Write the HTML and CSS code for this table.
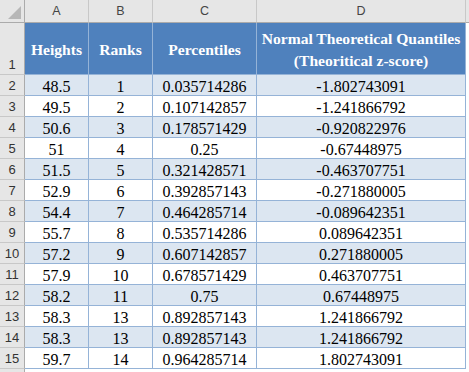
FILE: index.html
```html
<!DOCTYPE html>
<html lang="en">
<head>
  <meta charset="UTF-8" />
  <title>Normal Quantiles</title>
  <link rel="stylesheet" href="styles.css">
</head>
<body>
  <div class="sheet">
    <!-- column letters -->
    <div class="corner"><span class="corner-tri"></span></div>
    <div class="col-head">A</div>
    <div class="col-head">B</div>
    <div class="col-head">C</div>
    <div class="col-head">D</div>
    <div class="col-head edge"></div>

    <!-- title row -->
    <div class="row-head tall">1</div>
    <div class="cell title">Heights</div>
    <div class="cell title">Ranks</div>
    <div class="cell title">Percentiles</div>
    <div class="cell title">Normal Theoretical Quantiles<br>(Theoritical z-score)</div>
    <div class="pad"></div>

    <div class="row-head">2</div>
    <div class="cell band">48.5</div><div class="cell band">1</div><div class="cell band">0.035714286</div><div class="cell band">-1.802743091</div><div class="pad"></div>
    <div class="row-head">3</div>
    <div class="cell">49.5</div><div class="cell">2</div><div class="cell">0.107142857</div><div class="cell">-1.241866792</div><div class="pad"></div>
    <div class="row-head">4</div>
    <div class="cell band">50.6</div><div class="cell band">3</div><div class="cell band">0.178571429</div><div class="cell band">-0.920822976</div><div class="pad"></div>
    <div class="row-head">5</div>
    <div class="cell">51</div><div class="cell">4</div><div class="cell">0.25</div><div class="cell">-0.67448975</div><div class="pad"></div>
    <div class="row-head">6</div>
    <div class="cell band">51.5</div><div class="cell band">5</div><div class="cell band">0.321428571</div><div class="cell band">-0.463707751</div><div class="pad"></div>
    <div class="row-head">7</div>
    <div class="cell">52.9</div><div class="cell">6</div><div class="cell">0.392857143</div><div class="cell">-0.271880005</div><div class="pad"></div>
    <div class="row-head">8</div>
    <div class="cell band">54.4</div><div class="cell band">7</div><div class="cell band">0.464285714</div><div class="cell band">-0.089642351</div><div class="pad"></div>
    <div class="row-head">9</div>
    <div class="cell">55.7</div><div class="cell">8</div><div class="cell">0.535714286</div><div class="cell">0.089642351</div><div class="pad"></div>
    <div class="row-head">10</div>
    <div class="cell band">57.2</div><div class="cell band">9</div><div class="cell band">0.607142857</div><div class="cell band">0.271880005</div><div class="pad"></div>
    <div class="row-head">11</div>
    <div class="cell">57.9</div><div class="cell">10</div><div class="cell">0.678571429</div><div class="cell">0.463707751</div><div class="pad"></div>
    <div class="row-head">12</div>
    <div class="cell band">58.2</div><div class="cell band">11</div><div class="cell band">0.75</div><div class="cell band">0.67448975</div><div class="pad"></div>
    <div class="row-head">13</div>
    <div class="cell">58.3</div><div class="cell">13</div><div class="cell">0.892857143</div><div class="cell">1.241866792</div><div class="pad"></div>
    <div class="row-head">14</div>
    <div class="cell band">58.3</div><div class="cell band">13</div><div class="cell band">0.892857143</div><div class="cell band">1.241866792</div><div class="pad"></div>
    <div class="row-head">15</div>
    <div class="cell">59.7</div><div class="cell">14</div><div class="cell">0.964285714</div><div class="cell">1.802743091</div><div class="pad"></div>

    <div class="row-head empty"></div>
  </div>
</body>
</html>
```

FILE: styles.css
```css
html, body {
  margin: 0;
  padding: 0;
  background: #ffffff;
  overflow: hidden;
}

.sheet {
  display: grid;
  grid-template-columns: 25px 64px 64px 104px 209px 1fr;
  grid-template-rows: 23px 52px repeat(14, 21px) 10px;
  width: 469px;
  font-family: 'Liberation Serif', 'Times New Roman', serif;
  font-size: 16px;
  color: #000;
}

.sheet > div {
  box-sizing: border-box;
}

/* top-left corner */
.corner {
  position: relative;
  background: #e6e6e6;
  border-right: 1px solid #ababab;
  border-bottom: 1px solid #ababab;
}

.corner-tri {
  position: absolute;
  right: 3px;
  bottom: 3px;
  width: 0;
  height: 0;
  border-left: 13px solid transparent;
  border-bottom: 13px solid #b7b7b7;
}

.col-head {
  background: #e6e6e6;
  border-right: 1px solid #c8c8c8;
  border-bottom: 1px solid #ababab;
  font-family: 'Liberation Sans', Arial, sans-serif;
  font-size: 12.5px;
  color: #444;
  display: flex;
  align-items: center;
  justify-content: center;
}

.col-head.edge {
  border-right: none;
}

.row-head {
  background: #e6e6e6;
  border-right: 1px solid #ababab;
  border-bottom: 1px solid #c8c8c8;
  font-family: 'Liberation Sans', Arial, sans-serif;
  font-size: 13px;
  color: #333;
  display: flex;
  align-items: center;
  justify-content: center;
  padding-top: 1px;
}

.row-head.tall {
  align-items: flex-end;
  padding-bottom: 2px;
}

.row-head.empty {
  border-bottom: none;
}

.cell {
  border-right: 1px solid #95b3d7;
  border-bottom: 1px solid #95b3d7;
  display: flex;
  align-items: center;
  justify-content: center;
  padding-top: 3px;
  line-height: 18px;
  white-space: nowrap;
}

.cell.band {
  background: #dce6f1;
}

.cell.title {
  background: #4f81bd;
  color: #ffffff;
  font-size: 15.6px;
  font-weight: bold;
  text-align: center;
  line-height: 22px;
  padding-top: 2px;
}

.pad {
  background: #ffffff;
}
```
